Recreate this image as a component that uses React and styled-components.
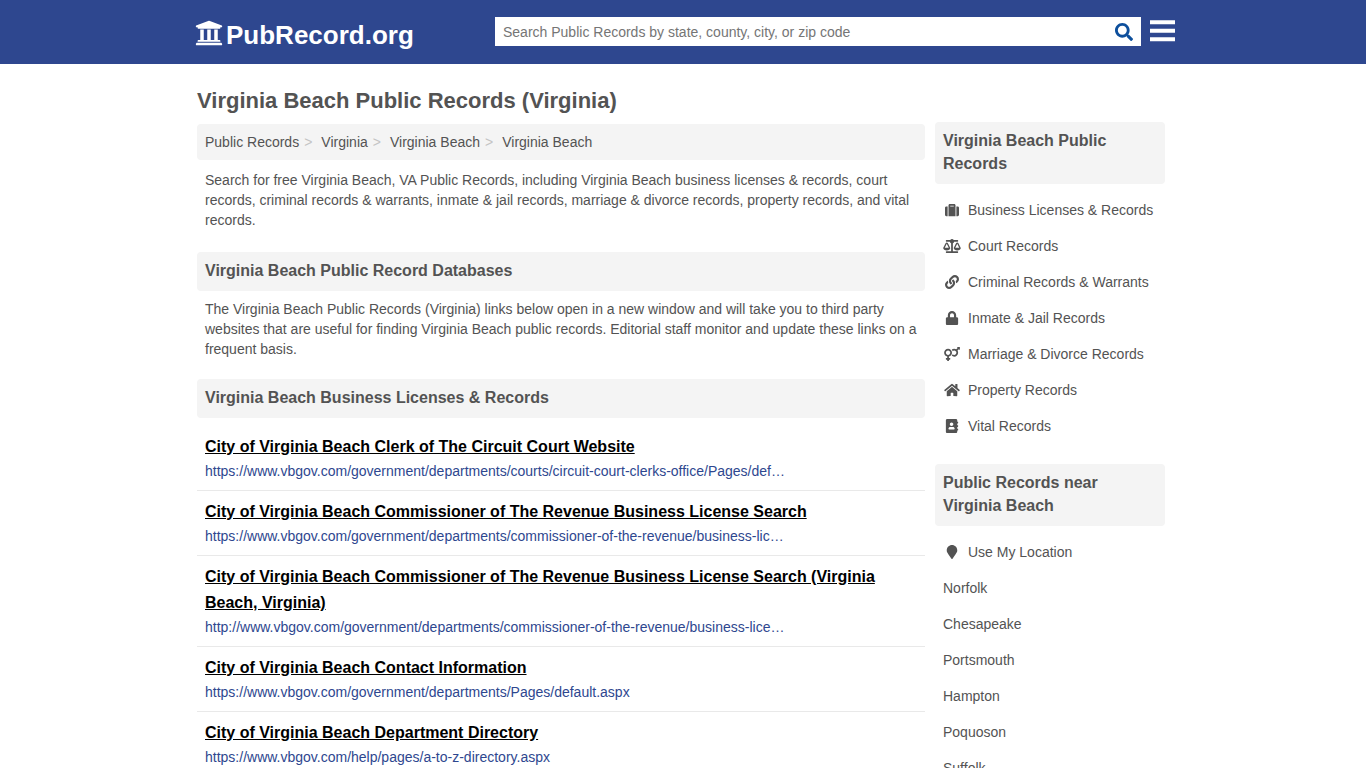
import React from "react";
import styled, { createGlobalStyle } from "styled-components";
import {
  FaUniversity,
  FaSearch,
  FaSuitcase,
  FaBalanceScale,
  FaLink,
  FaLock,
  FaVenusMars,
  FaHome,
  FaAddressBook,
  FaMapMarker,
} from "react-icons/fa";

const GlobalStyle = createGlobalStyle`
  *, *::before, *::after { box-sizing: border-box; }
  body {
    margin: 0;
    background: #fff;
    color: #535353;
    font: 14px/20px "Liberation Sans", Arial, Helvetica, sans-serif;
  }
  h1, h2, h3, p, ul, ol { margin: 0; padding: 0; }
  ul, ol { list-style: none; }
  a { color: inherit; text-decoration: none; }
`;

const Header = styled.header`
  background: #2e478f;
`;

const HeaderInner = styled.div`
  display: flex;
  align-items: center;
  max-width: 988px;
  height: 64px;
  margin: 0 auto;
  padding: 0 2px 2px 6px;
`;

const Logo = styled.a`
  display: flex;
  align-items: center;
  gap: 3px;
  flex: 1;
  padding-top: 8px;
  color: #fff;
  font-size: 26px;
  line-height: 32px;
  font-weight: bold;

  svg {
    margin-bottom: 4px;
    font-size: 28px;
  }
`;

const SearchForm = styled.form`
  display: flex;
  flex: 0 1 646px;
  height: 29px;
  padding-top: 2px;
  background: #fff;
`;

const SearchInput = styled.input`
  flex: 1;
  min-width: 0;
  padding: 0 8px;
  border: 0;
  outline: 0;
  background: transparent;
  color: #535353;
  font: inherit;

  &::placeholder {
    color: #757575;
    opacity: 1;
  }
`;

const IconButton = styled.button`
  display: flex;
  align-items: center;
  justify-content: center;
  padding: 0;
  border: 0;
  background: transparent;
  cursor: pointer;
`;

const SearchButton = styled(IconButton)`
  width: 34px;
  color: #0d4f9c;
  font-size: 18px;
`;

const MenuButton = styled(IconButton)`
  margin-left: 9px;
  color: #fff;
`;

const Page = styled.div`
  max-width: 980px;
  margin: 0 auto;
  padding: 23px 8px 0 4px;
`;

const PageTitle = styled.h1`
  margin-bottom: 7px;
  font-size: 22px;
  line-height: 28px;
`;

const Columns = styled.div`
  display: flex;
  align-items: flex-start;
  gap: 10px;
`;

const Main = styled.main`
  flex: 1;
  min-width: 0;
  padding-top: 2px;
`;

const Sidebar = styled.aside`
  flex: 0 0 230px;
`;

const Breadcrumb = styled.ol`
  display: flex;
  flex-wrap: wrap;
  gap: 4px;
  padding: 8px;
  border-radius: 4px;
  background: #f4f4f4;
`;

const Crumb = styled.li`
  &:not(:last-child)::after {
    content: ">";
    padding: 0 5px;
    color: #c4c4c4;
  }
`;

const SectionHeading = styled.h2`
  padding: 7px 8px 9px;
  border-radius: 4px;
  background: #f4f4f4;
  font-size: 16px;
  line-height: 23px;
`;

const Copy = styled.p`
  padding: ${(p) => (p.$intro ? "10px 8px 22px" : "8px 8px 20px")};
`;

const ResultList = styled.ul`
  padding-top: 8px;
`;

const Result = styled.li`
  padding: 8px;
  border-bottom: 1px solid #e9e9e9;
`;

const ResultTitle = styled.a`
  display: block;
  color: #000;
  font-size: 16px;
  line-height: 26px;
  font-weight: bold;
  text-decoration: underline;
`;

const ResultUrl = styled.p`
  overflow: hidden;
  color: #2e478f;
  line-height: 22px;
  white-space: nowrap;
`;

const SideList = styled.ul`
  padding: 8px 0 20px;
`;

const SideLink = styled.a`
  display: flex;
  align-items: center;
  gap: 7px;
  padding: 8px;
`;

const IconSlot = styled.span`
  display: flex;

  svg {
    width: 18px;
    height: 14px;
  }
`;

const crumbs = ["Public Records", "Virginia", "Virginia Beach", "Virginia Beach"];

const results = [
  ["City of Virginia Beach Clerk of The Circuit Court Website", "https://www.vbgov.com/government/departments/courts/circuit-court-clerks-office/Pages/def…"],
  ["City of Virginia Beach Commissioner of The Revenue Business License Search", "https://www.vbgov.com/government/departments/commissioner-of-the-revenue/business-lic…"],
  ["City of Virginia Beach Commissioner of The Revenue Business License Search (Virginia Beach, Virginia)", "http://www.vbgov.com/government/departments/commissioner-of-the-revenue/business-lice…"],
  ["City of Virginia Beach Contact Information", "https://www.vbgov.com/government/departments/Pages/default.aspx"],
  ["City of Virginia Beach Department Directory", "https://www.vbgov.com/help/pages/a-to-z-directory.aspx"],
];

const categories = [
  { label: "Business Licenses & Records", Icon: FaSuitcase },
  { label: "Court Records", Icon: FaBalanceScale },
  { label: "Criminal Records & Warrants", Icon: FaLink },
  { label: "Inmate & Jail Records", Icon: FaLock },
  { label: "Marriage & Divorce Records", Icon: FaVenusMars },
  { label: "Property Records", Icon: FaHome },
  { label: "Vital Records", Icon: FaAddressBook },
];

const nearby = [
  { label: "Use My Location", Icon: FaMapMarker },
  { label: "Norfolk" },
  { label: "Chesapeake" },
  { label: "Portsmouth" },
  { label: "Hampton" },
  { label: "Poquoson" },
  { label: "Suffolk" },
];

function MenuIcon() {
  return (
    <svg width="25" height="22" viewBox="0 0 25 22" fill="currentColor" aria-hidden="true">
      <path d="M0 .2h25v4H0zM0 8.7h25v4H0zM0 17.2h25v4H0z" />
    </svg>
  );
}

function SideSection({ title, items }) {
  return (
    <section>
      <SectionHeading>{title}</SectionHeading>
      <SideList>
        {items.map(({ label, Icon }) => (
          <li key={label}>
            <SideLink href="#">
              {Icon && (
                <IconSlot>
                  <Icon aria-hidden="true" />
                </IconSlot>
              )}
              {label}
            </SideLink>
          </li>
        ))}
      </SideList>
    </section>
  );
}

export default function App() {
  return (
    <>
      <GlobalStyle />
      <Header>
        <HeaderInner>
          <Logo href="#">
            <FaUniversity aria-hidden="true" />
            PubRecord.org
          </Logo>
          <SearchForm role="search" onSubmit={(e) => e.preventDefault()}>
            <SearchInput
              type="text"
              aria-label="Search Public Records"
              placeholder="Search Public Records by state, county, city, or zip code"
            />
            <SearchButton type="submit" aria-label="Search">
              <FaSearch />
            </SearchButton>
          </SearchForm>
          <MenuButton type="button" aria-label="Menu">
            <MenuIcon />
          </MenuButton>
        </HeaderInner>
      </Header>
      <Page>
        <PageTitle>Virginia Beach Public Records (Virginia)</PageTitle>
        <Columns>
          <Main>
            <nav aria-label="Breadcrumb">
              <Breadcrumb>
                {crumbs.map((crumb, i) => (
                  <Crumb key={i}>
                    <a href="#">{crumb}</a>
                  </Crumb>
                ))}
              </Breadcrumb>
            </nav>
            <Copy $intro>
              Search for free Virginia Beach, VA Public Records, including Virginia Beach business
              licenses &amp; records, court records, criminal records &amp; warrants, inmate &amp; jail
              records, marriage &amp; divorce records, property records, and vital records.
            </Copy>
            <SectionHeading>Virginia Beach Public Record Databases</SectionHeading>
            <Copy>
              The Virginia Beach Public Records (Virginia) links below open in a new window and will
              take you to third party websites that are useful for finding Virginia Beach public
              records. Editorial staff monitor and update these links on a frequent basis.
            </Copy>
            <SectionHeading>Virginia Beach Business Licenses &amp; Records</SectionHeading>
            <ResultList>
              {results.map(([title, url]) => (
                <Result key={title}>
                  <ResultTitle href="#">{title}</ResultTitle>
                  <ResultUrl>{url}</ResultUrl>
                </Result>
              ))}
            </ResultList>
          </Main>
          <Sidebar>
            <SideSection title="Virginia Beach Public Records" items={categories} />
            <SideSection title="Public Records near Virginia Beach" items={nearby} />
          </Sidebar>
        </Columns>
      </Page>
    </>
  );
}
